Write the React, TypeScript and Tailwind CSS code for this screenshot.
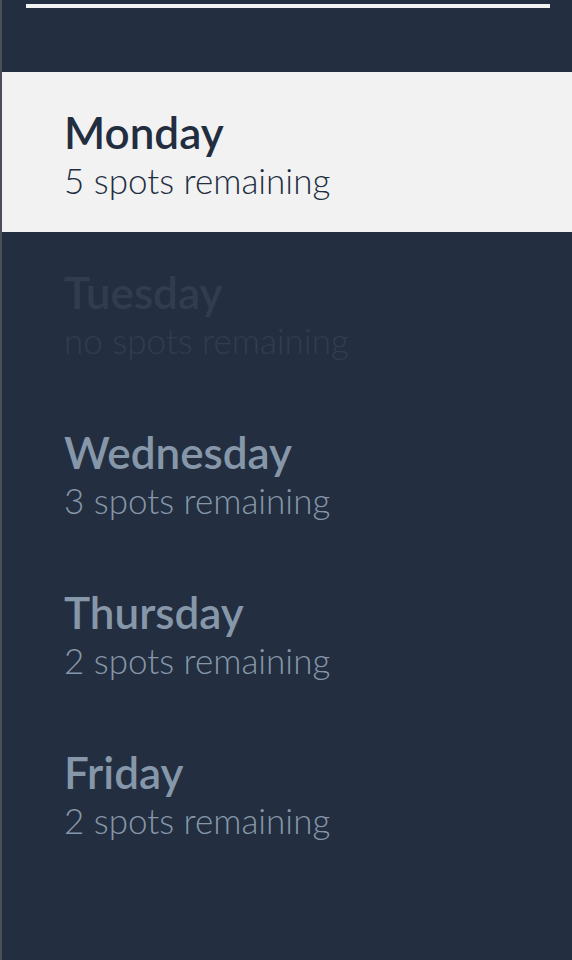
import React from "react";

const days = [
  { name: "Monday", sub: "5 spots remaining", state: "active" },
  { name: "Tuesday", sub: "no spots remaining", state: "disabled" },
  { name: "Wednesday", sub: "3 spots remaining", state: "normal" },
  { name: "Thursday", sub: "2 spots remaining", state: "normal" },
  { name: "Friday", sub: "2 spots remaining", state: "normal" },
];

export default function App() {
  return (
    <div
      className="w-[572px] h-[960px] bg-[#232f40] border-l-2 border-[#4a4f58] overflow-hidden"
      style={{ fontFamily: "Lato, 'Open Sans', sans-serif" }}
    >
      <div className="pt-1 pl-6 pr-[22px]">
        <div className="h-1 bg-[#f2f2f2]" />
      </div>
      <div className="h-[64px]" />
      <div className="flex flex-col">
        {days.map((d) => {
          const active = d.state === "active";
          const disabled = d.state === "disabled";
          const color = active
            ? "text-[#222e3f]"
            : disabled
            ? "text-[#313d4f]"
            : "text-[#8797aa]";
          return (
            <div
              key={d.name}
              className={
                active
                  ? "h-[160px] -ml-[2px] bg-[#f2f2f2] pl-[64px] flex flex-col justify-center"
                  : "h-[160px] pl-[62px] flex flex-col justify-center"
              }
            >
              <div className={`text-[44px] leading-[56px] font-semibold ${color}`}>
                {d.name}
              </div>
              <div className={`text-[35px] leading-[40px] font-light ${color}`}>
                {d.sub}
              </div>
            </div>
          );
        })}
      </div>
    </div>
  );
}
